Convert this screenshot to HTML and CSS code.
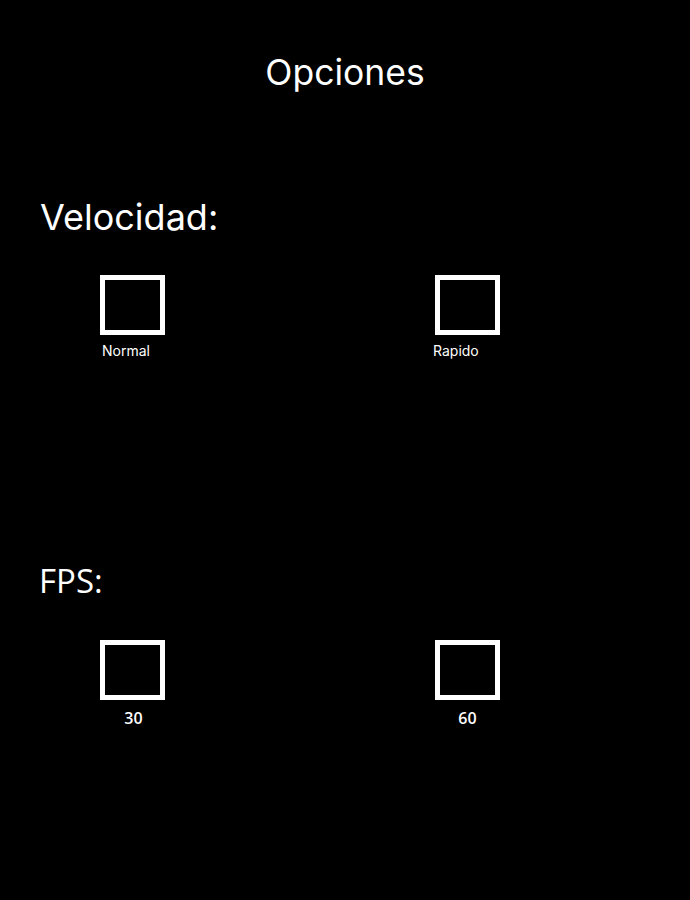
FILE: index.html
```html
<!DOCTYPE html>
<html>
	<head>
		<meta charset="UTF-8">
		<title>Opciones</title>
		<link rel="stylesheet" href="styles.css">
	</head>
	<body>
		<main class="options">
			<h1 class="title">Opciones</h1>

			<section class="group group-speed">
				<h2 class="group-title">Velocidad:</h2>
				<div class="choices">
					<label class="choice">
						<span class="box"></span>
						<span class="choice-label label-normal">Normal</span>
					</label>
					<label class="choice">
						<span class="box"></span>
						<span class="choice-label label-fast">Rapido</span>
					</label>
				</div>
			</section>

			<section class="group group-fps">
				<h2 class="group-title fps-title">FPS:</h2>
				<div class="choices">
					<label class="choice">
						<span class="box"></span>
						<span class="choice-label label-num label-30">30</span>
					</label>
					<label class="choice">
						<span class="box"></span>
						<span class="choice-label label-num">60</span>
					</label>
				</div>
			</section>
		</main>
	</body>
</html>
```
FILE: styles.css
```css
*{margin: 0;padding: 0;box-sizing: border-box;}
html,body{background: #000;}
body{color: #fff;font-family: "Inter", "Noto Sans", sans-serif;}

.options{width: 690px;height: 900px;padding-top: 53px;}
.title{font-size: 35.5px;line-height: 40px;font-weight: 400;text-align: center;}

.group{padding-left: 40px;}
.group-speed{margin-top: 104px;}
.group-fps{margin-top: 203px;}
.group-title{font-size: 36px;line-height: 40px;font-weight: 400;}
.fps-title{font-family: "Open Sans", "Noto Sans", sans-serif;font-size: 33px;margin-top: -1px;margin-left: -1px;}

.choices{display: grid;grid-template-columns: 335px 65px;padding-left: 60px;margin-top: 38px;}
.group-fps .choices{margin-top: 39px;}
.choice{display: flex;flex-direction: column;width: 65px;cursor: pointer;}
.box{display: block;width: 65px;height: 60px;border: 5px solid #fff;}

.choice-label{display: block;font-size: 14px;line-height: 16px;margin-top: 8px;white-space: nowrap;}
.label-normal{margin-left: 2px;}
.label-fast{margin-left: -2px;}
.label-num{font-family: "Open Sans", "Noto Sans", sans-serif;font-size: 16px;font-weight: 600;line-height: 20px;margin-top: 8px;text-align: center;}
.label-30{padding-left: 2px;}
```
